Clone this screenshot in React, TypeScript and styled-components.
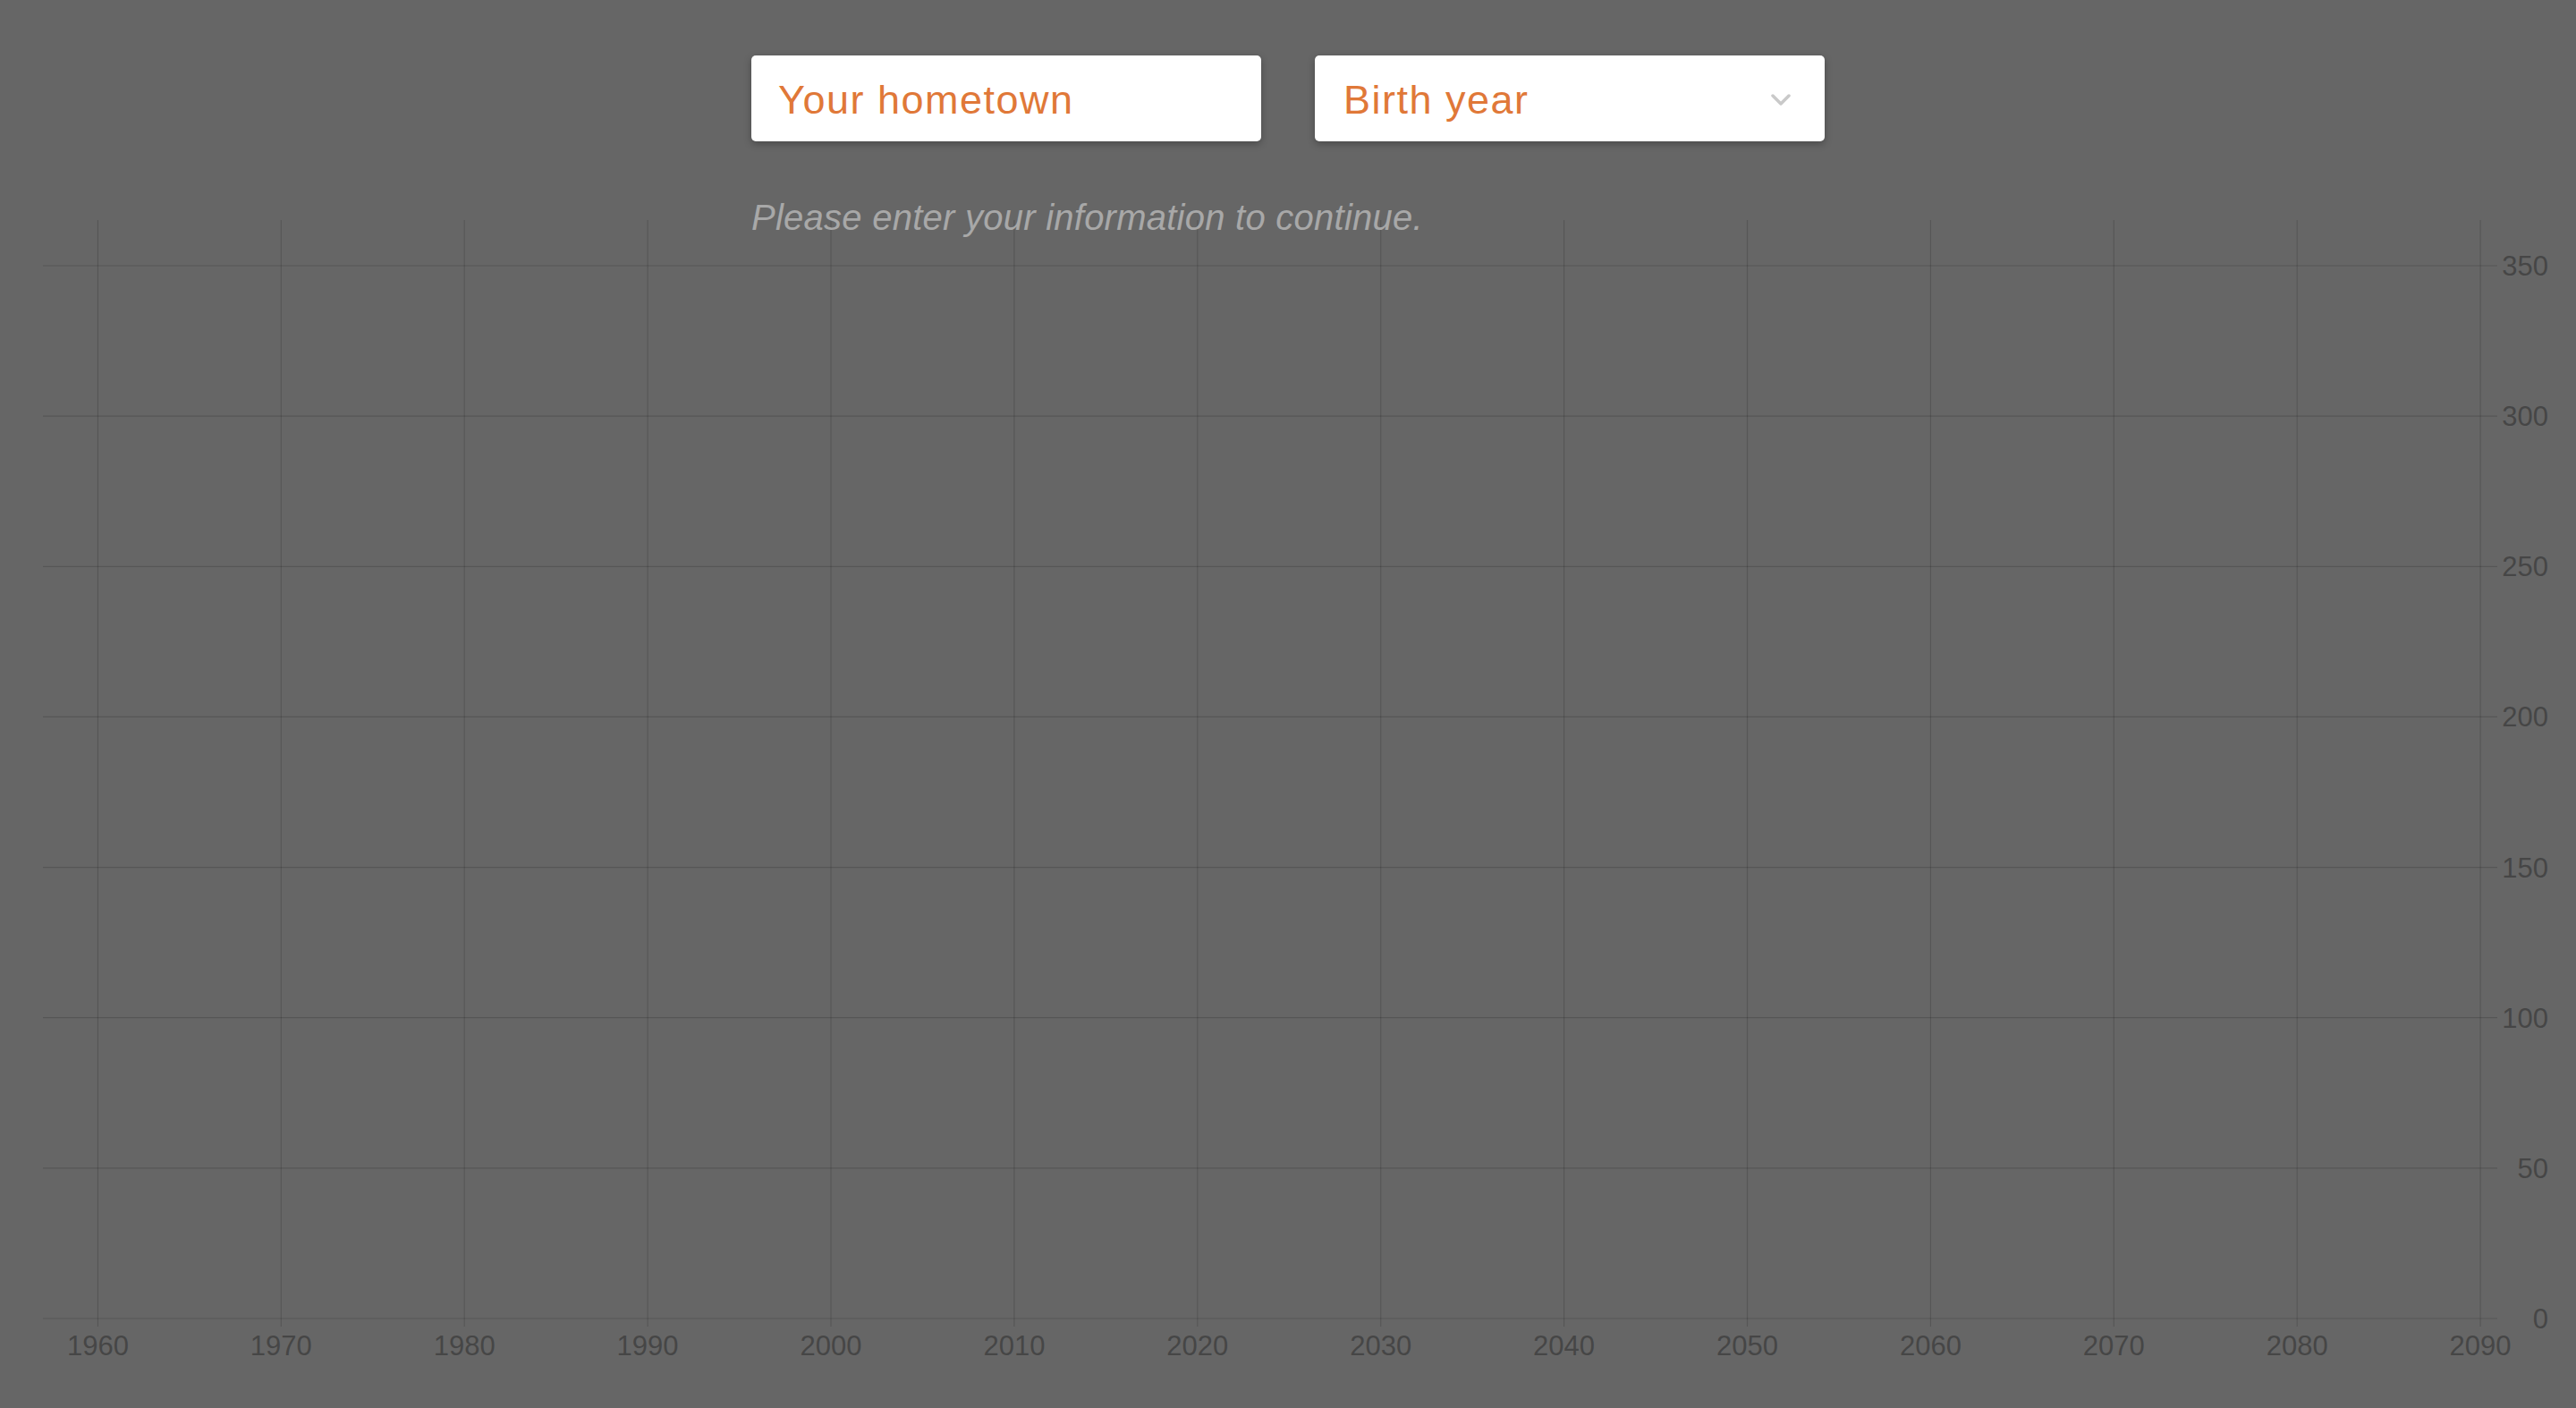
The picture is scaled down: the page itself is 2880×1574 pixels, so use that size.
import React from "react";
import styled, { createGlobalStyle } from "styled-components";

const GlobalStyle = createGlobalStyle`
  html, body {
    margin: 0;
    padding: 0;
    background: #666666;
  }
  body {
    font-family: "Liberation Sans", Arial, sans-serif;
    overflow: hidden;
  }
`;

const Page = styled.div`
  width: 2880px;
  height: 1574px;
  display: flex;
  flex-direction: column;
  background: #666666;
`;

const Header = styled.div`
  width: 1200px;
  margin: 0 auto;
  padding-top: 62px;
  display: flex;
  flex-direction: column;
  position: relative;
  z-index: 1;
`;

const Controls = styled.div`
  display: flex;
  gap: 60px;
`;

const Field = styled.div`
  box-sizing: border-box;
  width: 570px;
  height: 96px;
  background: #ffffff;
  border-radius: 5px;
  box-shadow: 0 3px 8px rgba(0, 0, 0, 0.28);
  display: flex;
  align-items: center;
  justify-content: space-between;
  padding: 4px 38px 0 30px;
`;

const TextInput = styled.input`
  border: none;
  outline: none;
  background: transparent;
  width: 100%;
  padding: 0;
  font-family: "Liberation Sans", Arial, sans-serif;
  font-size: 45px;
  letter-spacing: 1.5px;
  color: #e07838;
  &::placeholder {
    color: #e07838;
    opacity: 1;
  }
`;

const SelectLabel = styled.span`
  font-family: "Liberation Sans", Arial, sans-serif;
  font-size: 45px;
  letter-spacing: 1.5px;
  color: #e07838;
  margin-left: 2px;
`;

const Message = styled.p`
  margin: 0;
  margin-top: 61px;
  height: 48px;
  line-height: 48px;
  font-family: "Liberation Sans", Arial, sans-serif;
  font-style: italic;
  font-size: 40px;
  letter-spacing: 0.25px;
  color: #a8a8a8;
`;

const ChartSvg = styled.svg`
  display: block;
  margin-top: -27px;
  width: 2880px;
  height: 1334px;
`;

const GridLine = styled.line`
  stroke: rgba(0, 0, 0, 0.15);
  stroke-width: 1.2;
`;

const AxisLabel = styled.text`
  font-family: "Liberation Sans", Arial, sans-serif;
  font-size: 31px;
  fill: #464646;
`;

const Chevron = () => (
  <svg width="22" height="14" viewBox="0 0 22 14">
    <polyline
      points="2,2 11,11 20,2"
      fill="none"
      stroke="#c9c9c9"
      strokeWidth="3.5"
      strokeLinecap="round"
      strokeLinejoin="round"
    />
  </svg>
);

const years = Array.from({ length: 14 }, (_, i) => 1960 + i * 10);
const values = [350, 300, 250, 200, 150, 100, 50, 0];

const X0 = 109.4;
const XSTEP = 204.9;
const Y_TOP = 297;
const Y_BOTTOM = 1474;
const yFor = (v: number) => Y_BOTTOM - (v / 350) * (Y_BOTTOM - Y_TOP);

const Chart = () => (
  <ChartSvg viewBox="0 240 2880 1334">
    {years.map((yr, i) => {
      const x = X0 + i * XSTEP;
      return (
        <g key={yr}>
          <GridLine x1={x} x2={x} y1={246} y2={1483} />
          <AxisLabel x={x} y={1515} textAnchor="middle">
            {yr}
          </AxisLabel>
        </g>
      );
    })}
    {values.map((v) => {
      const y = yFor(v);
      return (
        <g key={v}>
          <GridLine x1={48} x2={2792} y1={y} y2={y} />
          <AxisLabel x={2849} y={y + 11} textAnchor="end">
            {v}
          </AxisLabel>
        </g>
      );
    })}
  </ChartSvg>
);

export default function App() {
  return (
    <>
      <GlobalStyle />
      <Page>
        <Header>
          <Controls>
            <Field>
              <TextInput placeholder="Your hometown" />
            </Field>
            <Field>
              <SelectLabel>Birth year</SelectLabel>
              <Chevron />
            </Field>
          </Controls>
          <Message>Please enter your information to continue.</Message>
        </Header>
        <Chart />
      </Page>
    </>
  );
}
